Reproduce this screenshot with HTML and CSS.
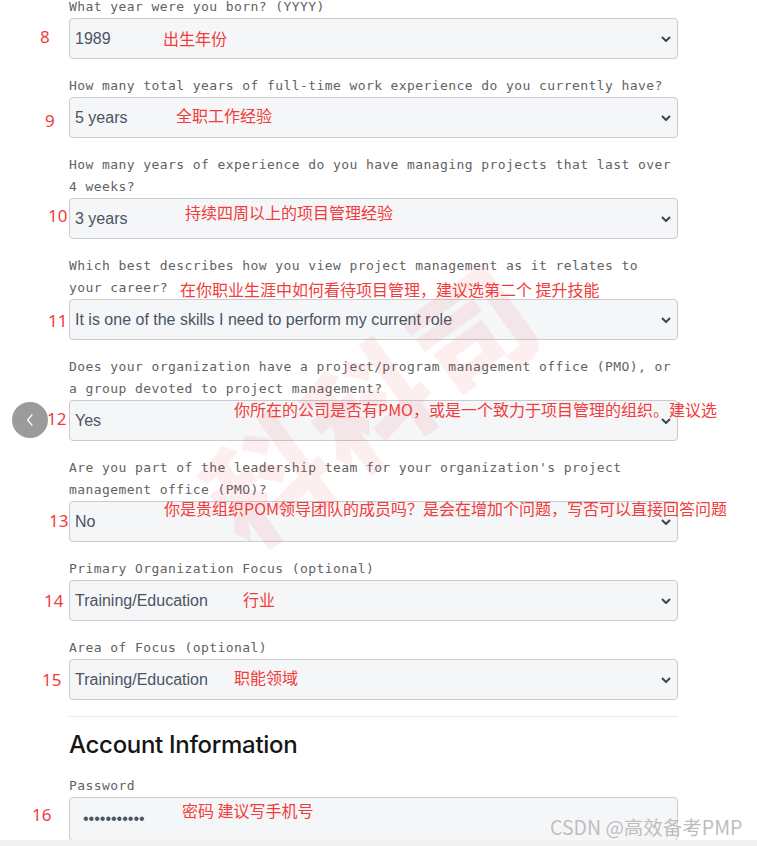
FILE: index.html
```html
<!DOCTYPE html>
<html lang="en">
<head>
    <meta charset="UTF-8">
    <meta name="viewport" content="width=device-width, initial-scale=1.0">
    <title>Profile Questions</title>
    <link rel="stylesheet" href="styles.css">
</head>
<body>
<div class="page">
    <form class="form">
        <div class="field">
            <label>What year were you born? (YYYY)</label>
            <div class="select"><span>1989</span><svg viewBox="0 0 10 6"><path d="M1 1l4 4 4-4"/></svg></div>
        </div>
        <div class="field">
            <label>How many total years of full-time work experience do you currently have?</label>
            <div class="select"><span>5 years</span><svg viewBox="0 0 10 6"><path d="M1 1l4 4 4-4"/></svg></div>
        </div>
        <div class="field">
            <label>How many years of experience do you have managing projects that last over 4 weeks?</label>
            <div class="select"><span>3 years</span><svg viewBox="0 0 10 6"><path d="M1 1l4 4 4-4"/></svg></div>
        </div>
        <div class="field">
            <label>Which best describes how you view project management as it relates to your career?</label>
            <div class="select"><span>It is one of the skills I need to perform my current role</span><svg viewBox="0 0 10 6"><path d="M1 1l4 4 4-4"/></svg></div>
        </div>
        <div class="field">
            <label>Does your organization have a project/program management office (PMO), or a group devoted to project management?</label>
            <div class="select"><span>Yes</span><svg viewBox="0 0 10 6"><path d="M1 1l4 4 4-4"/></svg></div>
        </div>
        <div class="field">
            <label>Are you part of the leadership team for your organization's project management office (PMO)?</label>
            <div class="select"><span>No</span><svg viewBox="0 0 10 6"><path d="M1 1l4 4 4-4"/></svg></div>
        </div>
        <div class="field">
            <label>Primary Organization Focus (optional)</label>
            <div class="select"><span>Training/Education</span><svg viewBox="0 0 10 6"><path d="M1 1l4 4 4-4"/></svg></div>
        </div>
        <div class="field">
            <label>Area of Focus (optional)</label>
            <div class="select"><span>Training/Education</span><svg viewBox="0 0 10 6"><path d="M1 1l4 4 4-4"/></svg></div>
        </div>

        <hr class="divider">

        <h2 class="section-title">Account Information</h2>

        <div class="field">
            <label>Password</label>
            <input class="input" type="password" value="12345678901">
        </div>
    </form>

    <!-- watermark stamp -->
    <div class="stamp">科科司</div>

    <!-- hand annotations -->
    <span class="num n8">8</span>
    <span class="num n9">9</span>
    <span class="num n10">10</span>
    <span class="num n11">11</span>
    <span class="num n12">12</span>
    <span class="num n13">13</span>
    <span class="num n14">14</span>
    <span class="num n15">15</span>
    <span class="num n16">16</span>

    <span class="note t8">出生年份</span>
    <span class="note t9">全职工作经验</span>
    <span class="note t10">持续四周以上的项目管理经验</span>
    <span class="note t11">在你职业生涯中如何看待项目管理，建议选第二个 提升技能</span>
    <span class="note t12">你所在的公司是否有PMO，或是一个致力于项目管理的组织。建议选</span>
    <span class="note t13">你是贵组织POM领导团队的成员吗？是会在增加个问题，写否可以直接回答问题</span>
    <span class="note t14">行业</span>
    <span class="note t15">职能领域</span>
    <span class="note t16">密码 建议写手机号</span>

    <button class="back" type="button">
        <svg viewBox="0 0 12 20"><path d="M9 3L3 10l6 7"/></svg>
    </button>

    <div class="csdn">CSDN @高效备考PMP</div>
</div>
<div class="strip"></div>
</body>
</html>
```

FILE: styles.css
```css
:root {
    --label: #626262;
    --field-bg: #f5f6f8;
    --field-border: #c9cbcf;
    --field-text: #4b5462;
    --note: #f23b3b;
}

* {
    margin: 0;
    padding: 0;
    box-sizing: border-box;
}

body {
    background: #fff;
    font-family: 'Liberation Sans', Arial, sans-serif;
    overflow: hidden;
}

.page {
    position: relative;
    height: 840px;
    overflow: hidden;
}

.form {
    width: 609px;
    margin: -4px 0 0 69px;
}

.field {
    margin-bottom: 16px;
}

.field label {
    display: block;
    font-family: 'DejaVu Sans Mono', 'Liberation Mono', monospace;
    font-size: 13px;
    letter-spacing: 0.42px;
    line-height: 22px;
    color: var(--label);
}

.select {
    display: flex;
    align-items: center;
    justify-content: space-between;
    height: 41px;
    padding: 0 6px 0 5px;
    background: var(--field-bg);
    border: 1px solid var(--field-border);
    border-radius: 4px;
    font-size: 16px;
    color: var(--field-text);
}

.select svg {
    width: 10px;
    height: 6px;
    fill: none;
    stroke: #3d4550;
    stroke-width: 2;
}

.divider {
    border: none;
    border-top: 1px solid #e4e8ec;
    margin: 0 0 13px;
}

.section-title {
    font-family: 'Inter', sans-serif;
    font-size: 24px;
    font-weight: 500;
    letter-spacing: -0.3px;
    line-height: 30px;
    color: #161616;
    margin-bottom: 15px;
}

.input {
    display: block;
    width: 100%;
    height: 44px;
    padding: 0 13px;
    background: var(--field-bg);
    border: 1px solid var(--field-border);
    border-radius: 4px;
    font-family: 'Liberation Sans', Arial, sans-serif;
    font-size: 16px;
    color: var(--field-text);
    outline: none;
}

/* annotations */
.num,
.note {
    position: absolute;
    line-height: 20px;
    color: var(--note);
    white-space: nowrap;
}

.num {
    font-family: 'Noto Sans', sans-serif;
    font-size: 17px;
}

.note {
    font-family: 'Noto Sans CJK SC', sans-serif;
    font-size: 16px;
}

.n8 { left: 40px; top: 27px; }
.n9 { left: 45px; top: 111px; }
.n10 { left: 48px; top: 206px; }
.n11 { left: 48px; top: 311px; }
.n12 { left: 47px; top: 409px; }
.n13 { left: 49px; top: 511px; }
.n14 { left: 44px; top: 591px; }
.n15 { left: 42px; top: 670px; }
.n16 { left: 32px; top: 805px; }

.t8 { left: 163px; top: 28px; }
.t9 { left: 176px; top: 105px; }
.t10 { left: 185px; top: 202px; }
.t11 { left: 180px; top: 279px; }
.t12 { left: 234px; top: 399px; }
.t13 { left: 164px; top: 498px; }
.t14 { left: 243px; top: 589px; }
.t15 { left: 234px; top: 667px; }
.t16 { left: 182px; top: 800px; }

.stamp {
    position: absolute;
    left: 180px;
    top: 340px;
    font-family: 'Noto Sans CJK SC', sans-serif;
    font-size: 120px;
    font-weight: 900;
    line-height: 1;
    letter-spacing: 6px;
    color: rgba(230, 40, 50, 0.08);
    transform: rotate(-36deg);
    pointer-events: none;
}

.back {
    position: absolute;
    left: 12px;
    top: 402px;
    width: 36px;
    height: 36px;
    border: none;
    border-radius: 50%;
    background: #9b9b9b;
    display: flex;
    align-items: center;
    justify-content: center;
}

.back svg {
    width: 10px;
    height: 16px;
    fill: none;
    stroke: #fff;
    stroke-width: 1.6;
}

.csdn {
    position: absolute;
    left: 550px;
    top: 815px;
    font-family: 'Noto Sans CJK SC', sans-serif;
    font-size: 19.5px;
    line-height: 24px;
    color: #bdbdbd;
    text-shadow: 0 0 1px #fff;
}

.strip {
    height: 6px;
    background: #f0f0f0;
}
```
